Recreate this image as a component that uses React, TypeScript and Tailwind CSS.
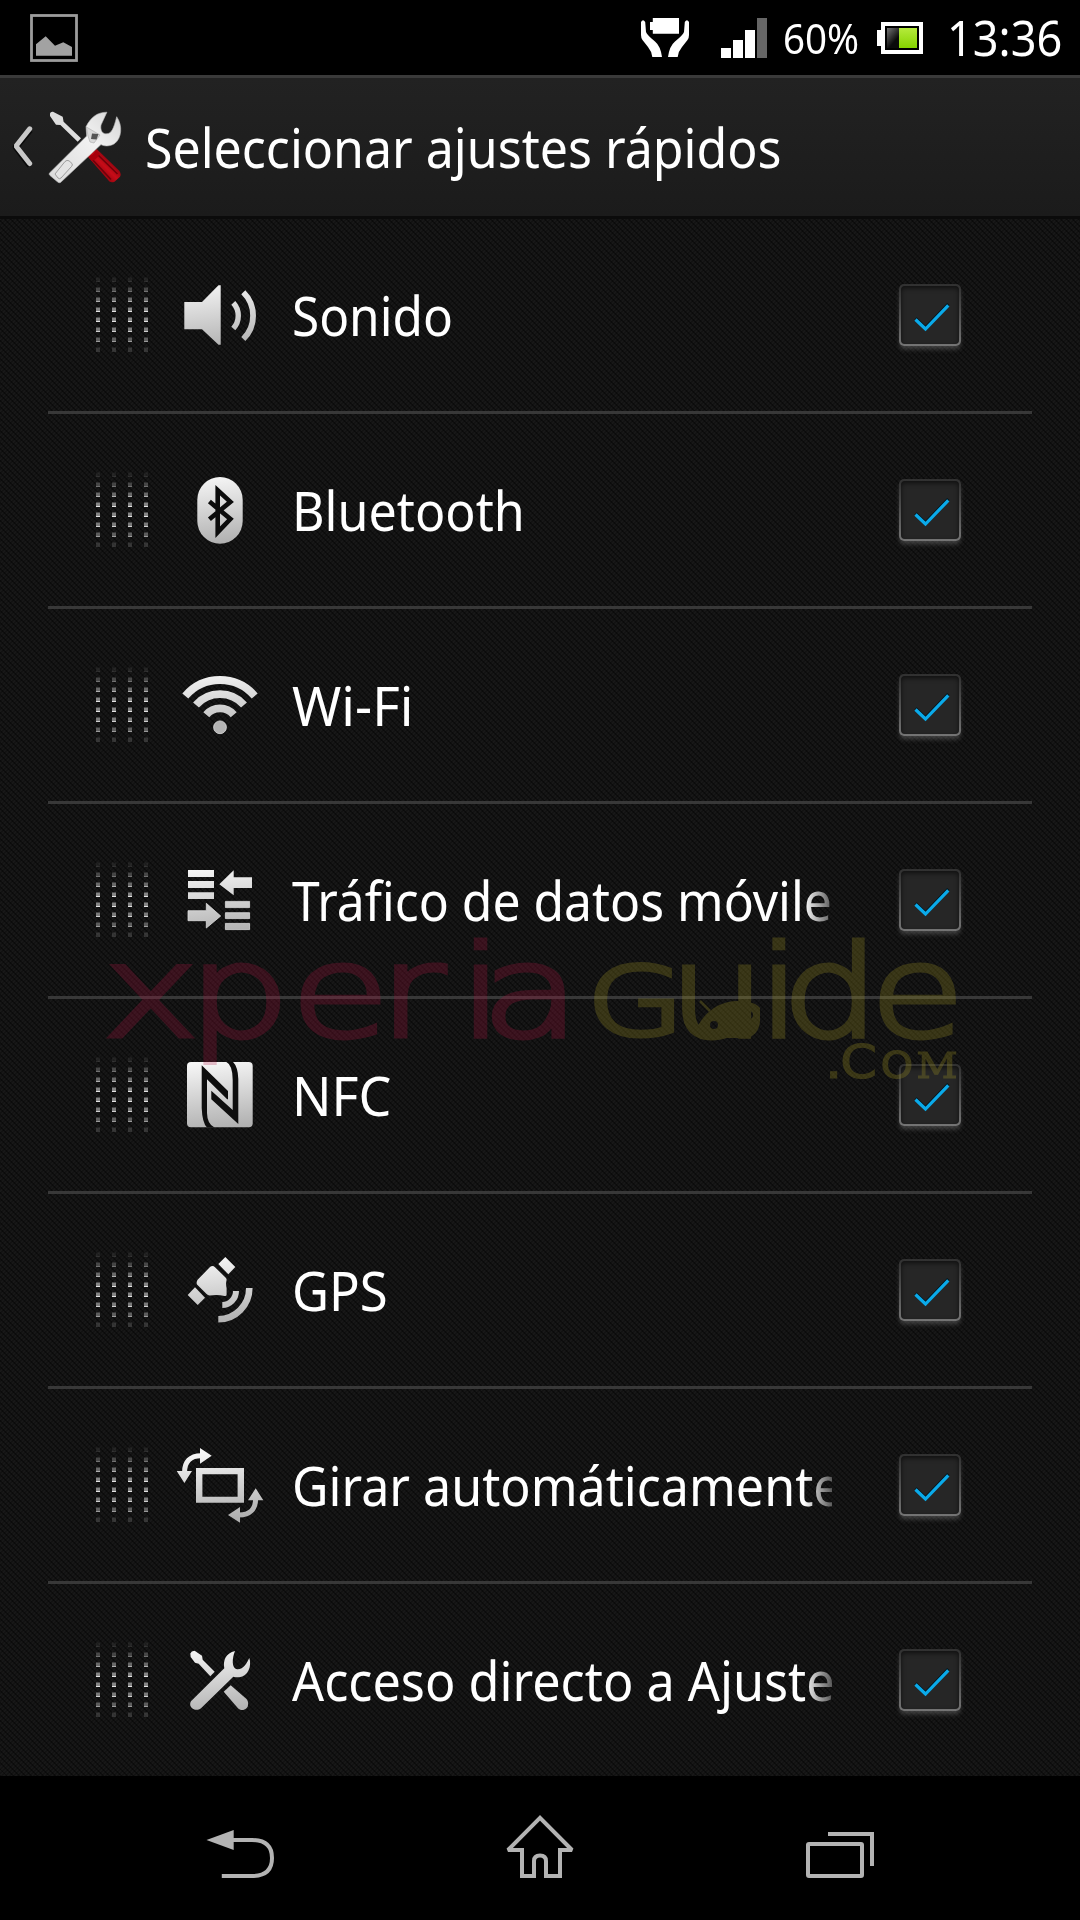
import type { ReactNode } from 'react';

const METAL = 'url(#metal)';

function Glyph({ children }: { children: ReactNode }) {
  return (
    <svg viewBox="0 0 96 96" className="h-24 w-24 shrink-0" fill={METAL}>
      {children}
    </svg>
  );
}

function SoundIcon() {
  return (
    <Glyph>
      <path d="M12.3 35H30L46.5 18.3H48.7V77.8H46.5L30 62.3H12.3Z" />
      <path d="M61.3 35.9A19 19 0 0 1 61.3 61.5" fill="none" stroke={METAL} strokeWidth="5.4" />
      <path d="M71.3 25.3A32.8 32.8 0 0 1 71.3 72" fill="none" stroke={METAL} strokeWidth="5.8" />
    </Glyph>
  );
}

function BluetoothIcon() {
  return (
    <Glyph>
      <rect x="25.3" y="15" width="45.4" height="66.7" rx="22.7" />
      <path d="M37.4 39.6L58.4 57L45.7 70.2V28.2L58.4 39.8L37.4 57.2" fill="none" stroke="#0c0c0c" strokeWidth="4.6" />
    </Glyph>
  );
}

function WifiIcon() {
  return (
    <Glyph>
      <g fill="none" stroke={METAL} strokeWidth="7.8">
        <path d="M13.3 39A45.6 45.6 0 0 1 82.7 39" />
        <path d="M24 48A32 32 0 0 1 72 48" />
        <path d="M34.3 57.7A17.9 17.9 0 0 1 61.7 57.7" />
      </g>
      <circle cx="48" cy="70.3" r="6.4" fill="#b4b4b4" stroke="#dedede" strokeWidth="0.8" />
    </Glyph>
  );
}

function DataIcon() {
  return (
    <Glyph>
      <path d="M16 18H42V25H16ZM16 29H42V36H16ZM16 40.3H42V47H16Z" />
      <path d="M47.3 32.3L61.7 18.3V25.3H80V36H61.7V43.3Z" />
      <path d="M48.7 64L34.3 51.3V58.7H16V68.7H34.3V76Z" stroke="#dcdcdc" strokeWidth="0.8" />
      <path d="M53.4 49.4H77.6V55.6H53.4ZM53.4 60.7H77.6V66.6H53.4ZM53.4 71.4H77.6V77.6H53.4Z" stroke="#dcdcdc" strokeWidth="0.8" />
    </Glyph>
  );
}

function NfcIcon() {
  return (
    <Glyph>
      <rect x="15" y="15" width="65.7" height="65.2" rx="4" />
      <path d="M29.7 18.3V61Q30.3 76 35 80.6H42.5Q35.2 77 35 66V32.3L55.2 52.3H56V44Z" fill="#0e0e0e" />
      <path d="M53.7 14.6H60.7Q66 20 66.3 32V77L39.3 52.3V43.7L60.7 63V33Q60.7 18 53.7 14.6Z" fill="#0e0e0e" />
    </Glyph>
  );
}

function GpsIcon() {
  return (
    <Glyph>
      <path d="M53.3 15L63.3 25L56.3 32.3L46.3 22Z" />
      <path d="M38 25Q40.7 23 43 25.2L54 36Q55 37.4 54.4 39Q53.6 42 54.6 46V52.5Q54.6 54.4 52.5 54Q46 52.4 38 53.4Q36 53.6 34.6 52L25 42.5Q24 40.3 25.6 37.8Z" />
      <path d="M23 45.3L33 55.7L25.7 63L15.7 53Z" />
      <g fill="none" stroke={METAL}>
        <path d="M64 49A13.7 14 0 0 1 50.3 63" strokeWidth="6" />
        <path d="M77.3 46A31 31.3 0 0 1 46.3 77.3" strokeWidth="6.6" />
      </g>
    </Glyph>
  );
}

function RotateIcon() {
  return (
    <Glyph>
      <path d="M24 31H72V65.8H24ZM30.4 37.2V59.8H65.6V37.2Z" fillRule="evenodd" />
      <path d="M28 11L39.7 18.7L28 26.7ZM4.7 34H20L12.4 46Z" />
      <path d="M12.6 35C12.6 25 18 18.7 29 18.7" fill="none" stroke={METAL} strokeWidth="5" />
      <path d="M83.7 51.3L91.3 63.3H76ZM56 78L68 70V85.7Z" />
      <path d="M67 78C78 78 83.6 72 83.6 62" fill="none" stroke={METAL} strokeWidth="5" />
    </Glyph>
  );
}

function ToolsIcon() {
  return (
    <Glyph>
      <path d="M18.3 21.5Q19.5 18.6 23 18.9L30 23.7L30.7 27.7L42.7 39.7L38.3 44.3L26.7 31.7L23 30.7L18.7 25Z" />
      <path d="M52.3 36.3C50.8 28 54 21 63 19C60 26 59.5 36.5 65 37.3C71 38 75 31 77.3 26C80 34 76 44.5 67.3 45.3Q64 45.5 61.3 44.7L29 76.3C25 79.5 19 77.5 18.2 73C18 70.5 18.8 69.3 20 68.2Z" />
      <path d="M51.7 59.7L58.7 53.3L74.5 67C76.5 69 76.8 74 74.5 76.3C72 78.8 68 78.6 66 76.3Z" />
    </Glyph>
  );
}

function SettingsLogo() {
  return (
    <svg viewBox="0 0 84 84" className="ml-[10px] h-[84px] w-[84px] shrink-0">
      <defs>
        <linearGradient id="wrench" x1="0" y1="1" x2="1" y2="0">
          <stop offset="0" stopColor="#d9d9d9" />
          <stop offset="0.6" stopColor="#f2f2f2" />
          <stop offset="1" stopColor="#d4d4d4" />
        </linearGradient>
        <linearGradient id="grip" x1="0" y1="1" x2="1" y2="0">
          <stop offset="0.2" stopColor="#6e0008" />
          <stop offset="0.5" stopColor="#c80c18" />
          <stop offset="0.8" stopColor="#6e0008" />
        </linearGradient>
      </defs>
      <path d="M6 8.5Q6.5 6.5 9 6.8L18.7 11.7L19.6 16.7L37 33.3L33.7 36.7L16.4 20L12 19.8L6 11Z" fill="#dedede" />
      <path d="M43.3 51L52.7 44L75.5 66Q77.6 69.5 76 71.8L70.5 76.7Q67.5 78 65.4 76.5Z" fill="url(#grip)" />
      <path d="M47 53L67 74.500M52 48L73.500 69" stroke="#70000a" strokeWidth="1.6" />
      <path d="M44 51.5Q49 51 52 45.5L55.5 49Q53 54.5 47.5 56Z" fill="#a8000c" />
      <path d="M5.3 68.2L42.7 31L42 21.7C47 12 53 7.4 62.9 7.2L57 20C56 26 59 29.4 63 28.8C67.5 28 69.5 24.5 72.7 11.7C79 21 77.5 33 71 38.3C66.5 41.6 60 41.4 57 39.6L16.5 77.5Q15 78.4 13.4 76.8L6 70.5Q4.8 69.4 5.3 68.2Z" fill="url(#wrench)" stroke="#bdbdbd" strokeWidth="0.6" />
      <path d="M11 69L21 56.5Q23 54.6 25 55.8L28 58.5Q29 60 27.5 61.5L17 73Q15.4 74.4 14 73Z" fill="#e4e4e4" stroke="#8c8c8c" strokeWidth="0.8" />
      <path d="M42.4 22L56 30L50 38L46 37L44 31Z" fill="#dadada" stroke="#aaa" strokeWidth="0.6" />
      <path d="M48 28.5L54.5 29L52.5 34.5L47 34Z" fill="#555" />
    </svg>
  );
}

function DragHandle() {
  return (
    <svg viewBox="0 0 52 76" className="h-[76px] w-[52px] shrink-0">
      {[0.14, 0.45, 0.75, 1, 1, 0.9, 0.65, 0.3].map((o, r) =>
        [0, 16, 32, 48].map((x) => (
          <g key={`${r}-${x}`} opacity={o}>
            <rect x={x} y={r * 10 + 0.5} width="4" height="4.5" fill="#858585" />
            <rect x={x} y={r * 10 + 4} width="4" height="1" fill={r === 7 ? '#858585' : '#e4e4e4'} />
          </g>
        )),
      )}
    </svg>
  );
}

function CheckBox() {
  return (
    <span className="ml-[67px] block h-[62px] w-[62px] shrink-0 rounded-[5px] bg-gradient-to-b from-[#303030] to-[#747474] p-[2px] shadow-[0_4px_5px_-1px_rgba(110,110,110,0.55)]">
      <span className="block h-[58px] w-[58px] rounded-[4px] bg-[#262626] shadow-[inset_0_2px_5px_rgba(0,0,0,0.6)]">
        <svg viewBox="0 0 58 58" className="h-[58px] w-[58px]" fill="none">
          <path d="M14.5 32.5L24.5 41.8L47.3 18" stroke="#04151c" strokeWidth="3.2" />
          <path d="M14.5 33.5L24.5 43L47.3 19.3" stroke="#0aaaea" strokeWidth="3.2" />
        </svg>
      </span>
    </span>
  );
}

const items = [
  { label: 'Sonido', icon: <SoundIcon />, stretch: 'scale-x-[0.9]' },
  { label: 'Bluetooth', icon: <BluetoothIcon />, stretch: 'scale-x-[0.912]' },
  { label: 'Wi-Fi', icon: <WifiIcon />, stretch: 'scale-x-[0.965]' },
  { label: 'Tráfico de datos móviles', icon: <DataIcon />, stretch: 'scale-x-[0.906]', fade: true },
  { label: 'NFC', icon: <NfcIcon />, stretch: 'scale-x-[0.945]' },
  { label: 'GPS', icon: <GpsIcon />, stretch: 'scale-x-[0.925]' },
  { label: 'Girar automáticamente', icon: <RotateIcon />, stretch: 'scale-x-[0.912]', fade: true },
  { label: 'Acceso directo a Ajustes', icon: <ToolsIcon />, stretch: 'scale-x-[0.915]', fade: true },
];

function StatusBar() {
  return (
    <div className="flex h-[75px] shrink-0 items-start bg-black">
      <svg viewBox="0 0 48 48" className="ml-[30px] mt-[14px] h-12 w-12 shrink-0">
        <rect x="1.5" y="1.5" width="45" height="45" fill="none" stroke="#9c9c9c" strokeWidth="2.8" />
        <path d="M6 30.3L15.7 22.2L25 31.7L33.3 28.3L42 33V41.8H6Z" fill="#a2a2a2" />
      </svg>
      <svg viewBox="0 0 48 40" className="ml-[563px] mt-[18px] h-10 w-12 shrink-0" fill="#fff">
        <path d="M11.8 0H38V15.8H11.8V12H9V4H11.8Z" />
        <path d="M0 4Q2 .6 4.2 4L5 14Q6 17 14 23.5Q19.5 28 21 39H11.3Q10.5 33 7 29L1.5 22Q0 20 0 17Z" />
        <path d="M48 4Q46 .6 43.8 4L43 14Q42 17 34 23.5Q28.5 28 27 39H36.7Q37.5 33 41 29L46.5 22Q48 20 48 17Z" />
      </svg>
      <svg viewBox="0 0 46 40" className="ml-8 mt-[18px] h-10 w-[46px] shrink-0" fill="#fff">
        <path d="M0 30H10V40H0ZM12 22H22V40H12ZM24 12H34V40H24Z" />
        <path d="M36 0H46V40H36Z" fill="#666" />
      </svg>
      <span className="ml-[16px] mt-[15px] block w-[94px] origin-left scale-x-[0.94] whitespace-nowrap text-[41px] leading-[46px]">60%</span>
      <svg viewBox="0 0 46 32" className="mt-[22px] h-8 w-[46px] shrink-0">
        <defs>
          <linearGradient id="drained" x1="0" y1="0" x2="0.7" y2="1">
            <stop offset="0" stopColor="#777" />
            <stop offset="0.75" stopColor="#0a0a0a" />
          </linearGradient>
          <linearGradient id="charge" x1="0" y1="0" x2="0" y2="1">
            <stop offset="0" stopColor="#b5ea3c" />
            <stop offset="1" stopColor="#86d400" />
          </linearGradient>
        </defs>
        <path d="M0 8H4V24H0Z" fill="#fff" />
        <rect x="6" y="2" width="38" height="28" fill="#000" stroke="#fff" strokeWidth="4" />
        <rect x="10" y="6" width="12" height="20" fill="url(#drained)" />
        <rect x="22" y="6" width="18" height="20" fill="url(#charge)" />
      </svg>
      <span className="ml-[24px] mt-[10px] block w-[122px] shrink-0 origin-left scale-x-[0.93] whitespace-nowrap text-[48.5px] leading-[54px]">13:36</span>
    </div>
  );
}

function Header() {
  return (
    <div className="flex h-36 shrink-0 items-center border-b-[3px] border-t-[3px] border-b-[#0b0b0b] border-t-[#3a3a3a] bg-gradient-to-b from-[#222] to-[#1b1b1b]">
      <svg viewBox="0 0 22 42" className="ml-3 h-[42px] w-[22px] shrink-0" fill="none">
        <path d="M18 4L4 21L18 39.5" stroke="#0a0a0a" strokeWidth="6.5" strokeLinejoin="round" />
        <path d="M17.7 2.8L4 20L17.7 37.5" stroke="#c9c9c9" strokeWidth="5" strokeLinecap="round" strokeLinejoin="bevel" />
      </svg>
      <SettingsLogo />
      <h1 className="-mt-px ml-[17px] origin-left scale-x-[0.91] whitespace-nowrap text-[55px] leading-[70px]">Seleccionar ajustes rápidos</h1>
    </div>
  );
}

function Watermark() {
  return (
    <svg viewBox="0 0 880 160" className="pointer-events-none absolute left-[100px] top-[705px] h-[160px] w-[880px]">
      <g opacity="0.25" fontFamily="'DejaVu Sans'" fontWeight="200" fontSize="127" fill="#b01442" stroke="#b01442" strokeWidth="5">
        <text transform="scale(1.26 1)" x="2.5 70 151.5 221.500 285 303" y="111.5">xperia</text>
      </g>
      <g opacity="0.25" fill="#a89c24" stroke="#a89c24" strokeWidth="5" fontFamily="'DejaVu Sans'" fontWeight="200">
        <text transform="scale(1.32 1)" x="369" y="111.5" fontSize="95">G</text>
        <text transform="scale(1.2 1)" x="474 548.5 568.5 642" y="111.5" fontSize="127">uide</text>
        <path
          d="M597 104C604 88 620 77 637 77C648 77 656 79 660 84V98Q658 112 646 114H612Q600 112 597 104ZM610 101A4 4 0 0 0 618 101A4 4 0 0 0 610 101ZM645 91A4 4 0 0 0 653 91A4 4 0 0 0 645 91Z"
          fillRule="evenodd"
          stroke="none"
        />
        <path d="M600 77L610 87M649 65L646 78" strokeWidth="2.5" />
      </g>
      <g opacity="0.27" fill="#a89c24" stroke="#a89c24" strokeWidth="1.2">
        <text transform="scale(1.12 1)" y="154" fontFamily="'DejaVu Sans'" fontVariant="small-caps">
          <tspan x="647" fontSize="50">.</tspan>
          <tspan x="661" fontSize="47">C</tspan>
          <tspan x="697" fontSize="52">o</tspan>
          <tspan x="729" fontSize="51" fontFamily="'DejaVu Serif'">m</tspan>
        </text>
      </g>
    </svg>
  );
}

function NavBar() {
  return (
    <div className="grid h-36 shrink-0 grid-cols-3 justify-items-center bg-black px-[90px]">
      <svg viewBox="0 0 72 144" className="h-36 w-[72px]" fill="none" stroke="#b3b3b3">
        <path d="M2.5 64L29.7 54V74Z" fill="#b3b3b3" stroke="none" />
        <path d="M29 64H48C61 64 68 70 68 82C68 94 61 100 48 100H17.8" strokeWidth="4" />
      </svg>
      <svg viewBox="0 0 72 144" className="h-36 w-[72px]" fill="none" stroke="#b3b3b3" strokeWidth="4">
        <path d="M36 41.8L4 74H18V100H30V85Q30 79.5 36 79.5Q42 79.5 42 85V100H56V74H68Z" strokeMiterlimit="2" />
      </svg>
      <svg viewBox="0 0 72 144" className="h-36 w-[72px]" fill="none" stroke="#b3b3b3" strokeWidth="4">
        <rect x="4" y="68" width="54" height="32" rx="1" />
        <path d="M24 58H68V90" />
      </svg>
    </div>
  );
}

export default function App() {
  return (
    <div className="flex h-[1920px] w-[1080px] flex-col overflow-hidden bg-black font-['Noto_Sans',sans-serif] text-white">
      <svg className="absolute h-0 w-0">
        <defs>
          <linearGradient id="metal" gradientUnits="userSpaceOnUse" x1="44" y1="14" x2="52" y2="82">
            <stop offset="0" stopColor="#f6f6f6" />
            <stop offset="1" stopColor="#b0b0b0" />
          </linearGradient>
        </defs>
      </svg>
      <StatusBar />
      <Header />
      <div className="relative flex h-[1557px] shrink-0 flex-col bg-[#121212] bg-[repeating-linear-gradient(45deg,rgba(0,0,0,0.4)_0px,rgba(0,0,0,0.4)_1.414px,transparent_1.414px,transparent_4.243px),repeating-linear-gradient(135deg,rgba(255,255,255,0.025)_0px,rgba(255,255,255,0.025)_1.414px,transparent_1.414px,transparent_2.828px)] px-12">
        {items.map((item, i) => (
          <div key={item.label} className={i < items.length - 1 ? 'border-b-[3px] border-[#383838]' : ''}>
            <div className="flex h-48 items-center pl-12">
              <DragHandle />
              <div className="ml-6">{item.icon}</div>
              <div
                className={
                  item.fade
                    ? 'ml-6 w-[540px] overflow-hidden [mask-image:linear-gradient(to_right,black_512px,transparent_552px)]'
                    : 'ml-6 w-[540px]'
                }
              >
                <span className={`inline-block origin-left whitespace-nowrap text-[55px] leading-[76px] ${item.stretch}`}>{item.label}</span>
              </div>
              <CheckBox />
            </div>
          </div>
        ))}
        <Watermark />
      </div>
      <NavBar />
    </div>
  );
}
